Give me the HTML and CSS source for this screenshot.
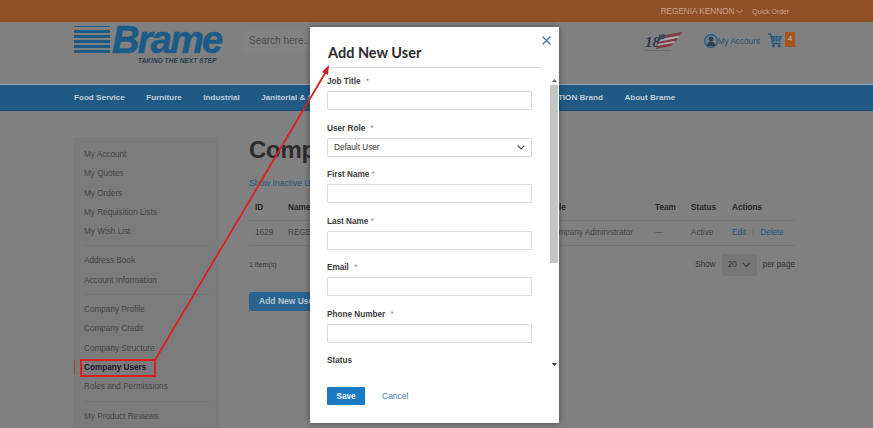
FILE: index.html
```html
<!DOCTYPE html>
<html lang="en">
<head>
    <meta charset="UTF-8">
    <meta name="viewport" content="width=device-width, initial-scale=1.0">
    <title>Company Users</title>
    <link rel="stylesheet" href="styles.css">
</head>
<body>
    <div class="topbar">
        <span class="customer">REGENIA KENNON</span>
        <svg class="customer-caret" width="7" height="5" viewBox="0 0 7 5"><path d="M.5 1 3.500 4 6.500 1" fill="none" stroke="#c9a58c" stroke-width="1"/></svg>
        <span class="quick-order">Quick Order</span>
    </div>

    <header class="header">
        <div class="logo">
            <div class="logo-stripes"><i></i><i></i><i></i><i></i><i></i><i></i></div>
            <div class="logo-text">
                <div class="logo-name">Brame</div>
                <div class="logo-tag">TAKING THE NEXT STEP</div>
            </div>
        </div>
        <div class="search">Search here...</div>
        <div class="header-right">
            <svg class="flag" width="38" height="20" viewBox="0 0 38 20">
                <text x="0" y="15" class="flag-num">18</text>
                <path d="M15 4 38 0 35 3 15 7Z" fill="#7d3a45"/>
                <path d="M15 7 34 4 33 6 15 9Z" fill="#b0a8a8"/>
                <path d="M14 10 33 6 31 9 13 12Z" fill="#7d3a45"/>
                <path d="M13 12 30 9 29 11 12 14Z" fill="#b0a8a8"/>
                <path d="M12 14 29 11 26 14 11 17Z" fill="#7d3a45"/>
                <path d="M14 3 20 2 19 7 14 8Z" fill="#3a4a5c"/>
                <path d="M0 18.500H26" stroke="#6a6a6a" stroke-width=".8"/>
            </svg>
            <div class="account">
                <svg width="14" height="14" viewBox="0 0 14 14">
                    <circle cx="7" cy="7" r="6.300" fill="#6f8191" stroke="#1f5a85" stroke-width="1.200"/>
                    <circle cx="7" cy="5" r="2.400" fill="#33404c"/>
                    <path d="M2.800 12c.3-3 2-4.400 4.200-4.400s3.900 1.400 4.200 4.400Z" fill="#33404c"/>
                </svg>
                <span>My Account</span>
            </div>
            <svg class="cart" width="14" height="16" viewBox="0 0 14 16">
                <path d="M0 1h2.500l2 9.500h8" fill="none" stroke="#1f5a85" stroke-width="1.300"/>
                <path d="M3.200 3H14l-1.300 5.500H4.300Z" fill="#1f5a85"/>
                <path d="M4 5H13.500M4.500 7H13M7 3 7.500 8.500M10.500 3 10 8.500" stroke="#6f8796" stroke-width=".5"/>
                <circle cx="5.500" cy="13" r="1.500" fill="#1f5a85"/>
                <circle cx="11" cy="13" r="1.500" fill="#1f5a85"/>
            </svg>
            <span class="cart-count">4</span>
        </div>
    </header>

    <nav class="nav">
        <a>Food Service</a>
        <a>Furniture</a>
        <a>Industrial</a>
        <a>Janitorial &amp; Sanitation</a>
        <a>Paper &amp; Packing</a>
        <a>Safety Supplies</a>
        <a>SOLUTION Brand</a>
        <a>About Brame</a>
    </nav>

    <div class="main">
        <aside class="sidebar">
            <ul class="side-group">
                <li>My Account</li>
                <li>My Quotes</li>
                <li>My Orders</li>
                <li>My Requisition Lists</li>
                <li>My Wish List</li>
            </ul>
            <ul class="side-group">
                <li>Address Book</li>
                <li>Account Information</li>
            </ul>
            <ul class="side-group">
                <li>Company Profile</li>
                <li>Company Credit</li>
                <li>Company Structure</li>
                <li class="current">Company Users</li>
                <li>Roles and Permissions</li>
            </ul>
            <ul class="side-group">
                <li>My Product Reviews</li>
            </ul>
        </aside>

        <section class="content">
            <h1>Company Users</h1>
            <a class="inactive-link">Show Inactive Users</a>
            <table class="users">
                <thead>
                    <tr>
                        <th class="col-id">ID</th>
                        <th class="col-name">Name</th>
                        <th class="col-email">Email</th>
                        <th class="col-role">Role</th>
                        <th class="col-team">Team</th>
                        <th class="col-status">Status</th>
                        <th>Actions</th>
                    </tr>
                </thead>
                <tbody>
                    <tr>
                        <td>1629</td>
                        <td>REGENIA KENNON</td>
                        <td>rkennon@brame.com</td>
                        <td>Company Administrator</td>
                        <td>—</td>
                        <td>Active</td>
                        <td><a>Edit</a><span class="sep">|</span><a>Delete</a></td>
                    </tr>
                </tbody>
            </table>
            <div class="pager">
                <span class="item-count">1 Item(s)</span>
                <span>Show</span>
                <span class="limit">20
                    <svg width="9" height="6" viewBox="0 0 9 6"><path d="M1 1 4.500 4.500 8 1" fill="none" stroke="#3d3d3d" stroke-width="1.200"/></svg>
                </span>
                <span>per page</span>
            </div>
            <button class="add-user">Add New User</button>
        </section>
    </div>

    <div class="modal">
        <svg class="modal-close" width="9" height="9" viewBox="0 0 9 9"><path d="M.5.5 8.500 8.500M8.500.5 .5 8.500" stroke="#3f75a0" stroke-width="1.200"/></svg>
        <h2>Add New User</h2>
        <form class="modal-form">
            <div class="field">
                <label>Job Title <em>*</em></label>
                <input type="text">
            </div>
            <div class="field">
                <label>User Role <em>*</em></label>
                <div class="select">
                    <span>Default User</span>
                    <svg width="8" height="5" viewBox="0 0 8 5"><path d="M.7.7 4 4 7.300.7" fill="none" stroke="#444" stroke-width="1.100"/></svg>
                </div>
            </div>
            <div class="field">
                <label>First Name <em class="star-close">*</em></label>
                <input type="text">
            </div>
            <div class="field">
                <label>Last Name <em class="star-close">*</em></label>
                <input type="text">
            </div>
            <div class="field">
                <label>Email <em>*</em></label>
                <input type="text">
            </div>
            <div class="field">
                <label>Phone Number <em>*</em></label>
                <input type="text">
            </div>
            <div class="field">
                <label>Status</label>
            </div>
        </form>
        <div class="scrollbar">
            <svg class="scroll-up" width="5" height="3" viewBox="0 0 5 3"><path d="M2.500 0 5 3H0Z" fill="#666"/></svg>
            <div class="scroll-thumb"></div>
            <svg class="scroll-down" width="5" height="3" viewBox="0 0 5 3"><path d="M0 0H5L2.500 3Z" fill="#333"/></svg>
        </div>
        <div class="modal-actions">
            <button type="button" class="save">Save</button>
            <a class="cancel">Cancel</a>
        </div>
    </div>

    <svg class="callout" width="873" height="428" viewBox="0 0 873 428">
        <rect x="81" y="360" width="74" height="16" fill="none" stroke="#d9201f" stroke-width="2"/>
        <path d="M155 360 327 70" stroke="#d9201f" stroke-width="1.800"/>
        <path d="M329 65 322 72 328 75Z" fill="#c81e1e"/>
    </svg>
</body>
</html>
```

FILE: styles.css
```css
* {
    box-sizing: border-box;
}
html, body {
    height: 428px;
    overflow: hidden;
}
body {
    margin: 0;
    position: relative;
    background: #808080;
    color: #333;
    font-family: "Liberation Sans", Arial, sans-serif;
    font-size: 8.200px;
}

/* top bar */
.topbar {
    height: 22px;
    padding-right: 84px;
    display: flex;
    align-items: center;
    justify-content: flex-end;
    background: #8f4f27;
    color: #c9a58c;
}
.customer {
    font-size: 8.200px;
}
.customer-caret {
    margin: 1px 9px 0 2px;
}
.quick-order {
    font-size: 6.800px;
}

/* header */
.header {
    height: 62px;
    padding: 2px 78px 0 74px;
    display: flex;
    align-items: flex-start;
}
.logo {
    width: 169px;
    display: flex;
    gap: 2px;
}
.logo-stripes {
    width: 36px;
    margin-top: 2px;
    display: flex;
    flex-direction: column;
    gap: 2px;
}
.logo-stripes i {
    display: block;
    height: 3px;
    background: #1f5a85;
}
.logo-stripes i:first-child {
    height: 1px;
    margin-bottom: 1px;
}
.logo-text {
    color: #1c5a87;
    font-style: italic;
    font-weight: bold;
}
.logo-name {
    font-size: 38px;
    line-height: 32px;
    letter-spacing: -1.800px;
    -webkit-text-stroke: .6px #1c5a87;
}
.logo-tag {
    margin-top: 1px;
    padding-left: 26px;
    font-size: 6.600px;
    white-space: nowrap;
    color: #2b3f4e;
}
.search {
    width: 90px;
    height: 22px;
    margin-top: 6px;
    padding: 0 6px;
    line-height: 22px;
    font-size: 10px;
    color: #4c4c4c;
    background: #828282;
    border-radius: 3px;
    white-space: nowrap;
}
.header-right {
    margin-left: auto;
    display: flex;
    align-items: flex-start;
}
.flag {
    margin-top: 8px;
}
.flag-num {
    font: italic bold 15px "Liberation Serif", serif;
    fill: #2b3b4c;
}
.account {
    margin: 10px 0 0 21px;
    display: flex;
    align-items: center;
    font-size: 8.200px;
    color: #2f4f68;
}
.cart {
    margin: 9px 0 0 8px;
}
.cart-count {
    width: 10px;
    height: 15px;
    margin: 8px 0 0 3px;
    text-align: center;
    line-height: 14px;
    font-size: 8px;
    color: #c9c0b8;
    background: #a8521f;
}

/* main nav */
.nav {
    height: 27px;
    padding-left: 74px;
    display: flex;
    gap: 21.500px;
    align-items: center;
    background: #1f5a85;
    border-top: 1px solid #8fa6b8;
    border-bottom: 1px solid #1b4a6c;
    color: #c3ccd3;
    font-size: 8.100px;
    font-weight: bold;
    white-space: nowrap;
}

/* page body */
.main {
    padding: 26px 78px 0 74px;
    display: flex;
}
.sidebar {
    width: 145px;
    height: 300px;
    margin-right: 30px;
    padding: 8px 10px 0;
    flex-shrink: 0;
    background: #7b7b7b;
    color: #454545;
}
.side-group {
    margin: 0 0 5px;
    padding: 0 0 4px;
    list-style: none;
    border-bottom: 1px solid #747474;
}
.side-group:last-child {
    border-bottom: none;
}
.side-group li {
    height: 19.300px;
    line-height: 19.300px;
    white-space: nowrap;
}
.side-group .current {
    position: relative;
    font-weight: bold;
    color: #1f1230;
}
.side-group .current::before {
    content: "";
    position: absolute;
    left: -10px;
    top: 2px;
    width: 1px;
    height: 15px;
    background: #8f4f27;
}
.content {
    flex: 1;
    min-width: 0;
}
.content h1 {
    margin: 0 0 15px;
    font-size: 24px;
    line-height: 26px;
    font-weight: bold;
    color: #2c2c2c;
    letter-spacing: -.3px;
}
.inactive-link {
    display: block;
    height: 12px;
    color: #2b567a;
    font-size: 8.500px;
}
.users {
    width: 100%;
    margin-top: 6px;
    border-collapse: collapse;
    table-layout: fixed;
    color: #454545;
}
.users th {
    height: 24px;
    padding: 0 6px;
    text-align: left;
    color: #262626;
    border-bottom: 1px solid #757575;
}
.users td {
    height: 25px;
    padding: 0 6px;
    border-bottom: 1px solid #757575;
    white-space: nowrap;
    overflow: hidden;
}
.users td a {
    color: #2b567a;
}
.users .sep {
    margin: 0 6px;
    color: #6a6a6a;
}
.col-id {
    width: 33px;
}
.col-name {
    width: 120px;
}
.col-email {
    width: 140px;
}
.col-role {
    width: 107px;
}
.col-team {
    width: 36px;
}
.col-status {
    width: 41px;
}
.pager {
    margin-top: 8px;
    display: flex;
    align-items: center;
    gap: 6px;
}
.item-count {
    margin-right: auto;
    font-size: 7px;
}
.limit {
    width: 35px;
    height: 22px;
    padding: 0 6px;
    display: flex;
    align-items: center;
    justify-content: space-between;
    background: #767676;
    border-radius: 2px;
}
.add-user {
    margin-top: 16px;
    height: 19px;
    padding: 0 10px;
    border: none;
    border-radius: 2px;
    background: #2a638f;
    color: #b9c6d0;
    font-family: inherit;
    font-size: 8.500px;
    font-weight: bold;
}

/* modal */
.modal {
    position: absolute;
    left: 310px;
    top: 27px;
    width: 249px;
    height: 396px;
    background: #fff;
    box-shadow: 0 0 6px rgba(0, 0, 0, .45);
}
.modal h2 {
    height: 41px;
    margin: 0 18px 4px 18px;
    padding-top: 17px;
    border-bottom: 1px solid #d9d9d9;
    font-family: Lato, sans-serif;
    font-size: 14.500px;
    line-height: 17px;
    font-weight: bold;
    color: #2c2c2c;
}
.modal-close {
    position: absolute;
    top: 9px;
    right: 8px;
}
.modal-form {
    height: 298px;
    padding: 0 27px 0 17px;
    overflow: hidden;
}
.field {
    height: 46.500px;
}
.field label {
    display: block;
    height: 19px;
    padding-top: 5px;
    font-size: 8.200px;
    font-weight: bold;
    color: #3a3a3a;
}
.field em {
    margin-left: 3px;
    font-style: normal;
    font-weight: normal;
    color: #8a8a8a;
}
.field .star-close {
    margin-left: 0;
}
.field input, .select {
    display: block;
    width: 205px;
    height: 19px;
    border: 1px solid #dcdcdc;
    border-radius: 1px;
    background: #fff;
}
.select {
    padding: 0 6px;
    display: flex;
    align-items: center;
    justify-content: space-between;
    font-size: 8.200px;
    color: #333;
}
.scrollbar {
    position: absolute;
    top: 49px;
    right: 1px;
    width: 8px;
    height: 292px;
    display: flex;
    flex-direction: column;
    align-items: center;
    background: #fff;
}
.scroll-up {
    margin-top: 3px;
}
.scroll-thumb {
    width: 8px;
    height: 178px;
    margin-top: 3px;
    background: #c4c4c4;
}
.scroll-down {
    margin-top: auto;
    margin-bottom: 2px;
}
.modal-actions {
    padding: 17px 0 0 17px;
    display: flex;
    align-items: center;
}
.save {
    width: 38px;
    height: 18px;
    padding: 0;
    border: none;
    border-radius: 1px;
    background: #1979c3;
    color: #fff;
    font-family: inherit;
    font-size: 8.200px;
    font-weight: bold;
}
.cancel {
    margin-left: 17px;
    font-size: 8.500px;
    color: #4a7fb0;
}

/* red arrow drawn over the shot */
.callout {
    position: absolute;
    left: 0;
    top: 0;
    pointer-events: none;
}
```
